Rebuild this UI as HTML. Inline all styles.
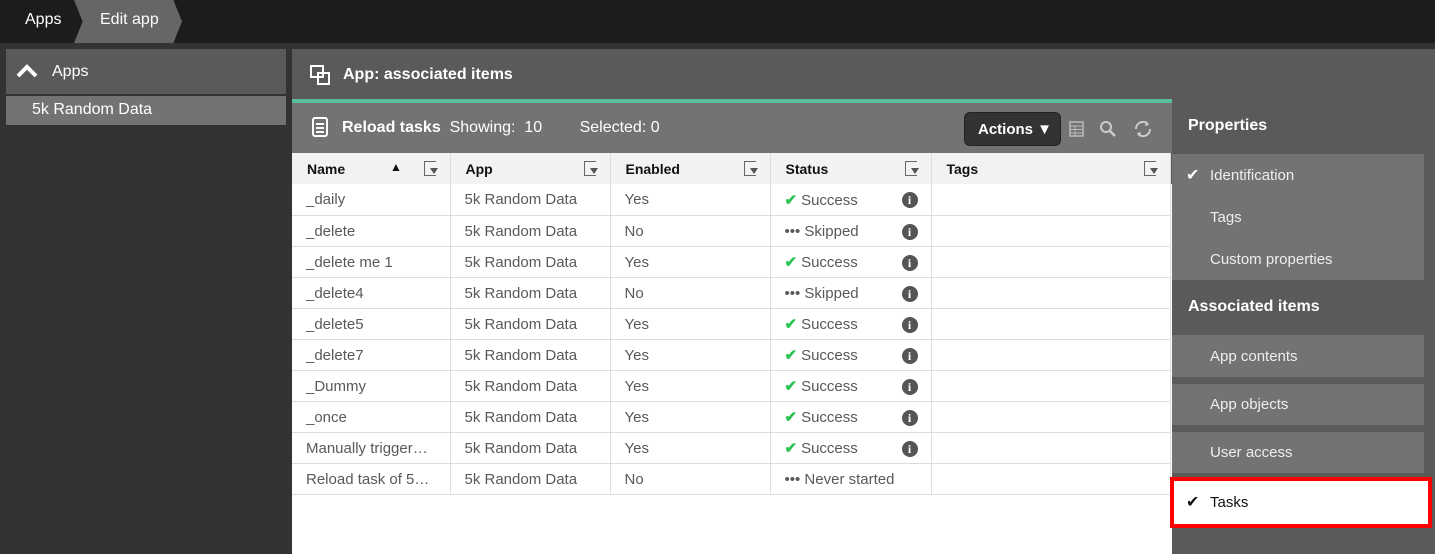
<!DOCTYPE html>
<html><head><style>
*{margin:0;padding:0;box-sizing:border-box}
body{width:1435px;height:554px;background:#333;font-family:"Liberation Sans",sans-serif;position:relative;overflow:hidden;font-size:15px}
.abs{position:absolute}
.top{left:0;top:0;width:1435px;height:43px;background:#1c1c1c}
.crumb{color:#fff;font-size:16px;top:11px}
table{border-collapse:collapse;position:absolute;left:292px;top:153px;width:878px;table-layout:fixed}
th{background:#f2f2f2;height:31px;text-align:left;font-size:14px;font-weight:bold;padding-left:15px;border-right:1px solid #ddd;color:#111;position:relative}
td{height:31px;border-right:1px solid #ddd;border-bottom:1px solid #ddd;padding-left:14px;padding-top:1px;color:#595959;font-size:15px;white-space:nowrap;overflow:hidden;position:relative}
tr.r td{height:31px}
.f{position:absolute;right:14px;top:8px;width:12px;height:15px;border:1.5px solid #666;border-right:none;border-bottom-width:1.5px}
.f:after{content:"";position:absolute;left:5px;top:6px;border:4px solid transparent;border-top:6px solid #555}
.ok{color:#2bc353;font-weight:bold;margin-right:4px}
.info{position:absolute;right:13px;top:8px;width:16px;height:16px;border-radius:50%;background:#555;color:#fff;font-size:12px;font-weight:bold;text-align:center;line-height:16px;font-family:"Liberation Serif",serif}
.ri{left:1172px;width:252px;background:#737373;color:#eee;font-size:15px;padding-left:38px}
</style></head><body>
<div class="abs top"></div>
<div class="abs" style="left:74px;top:0;width:108px;height:43px;background:#666;clip-path:polygon(0 0,92% 0,100% 50%,92% 100%,0 100%,8% 50%)"></div>
<div class="abs crumb" style="left:25px">Apps</div>
<div class="abs crumb" style="left:100px">Edit app</div>

<div class="abs" style="left:6px;top:49px;width:280px;height:45px;background:#5a5a5a"></div>
<svg class="abs" style="left:16px;top:64px" width="22" height="14"><path d="M2 12 L11 3 L20 12" stroke="#fff" stroke-width="4" fill="none"/></svg>
<div class="abs" style="left:52px;top:63px;color:#fff;font-size:16px">Apps</div>
<div class="abs" style="left:6px;top:96px;width:280px;height:29px;background:#737373;color:#fff;padding:5px 0 0 26px;font-size:16px">5k Random Data</div>

<div class="abs" style="left:292px;top:49px;width:1143px;height:505px;background:#5a5a5a"></div>
<svg class="abs" style="left:310px;top:65px" width="22" height="20"><rect x="1" y="1" width="12" height="11" fill="none" stroke="#fff" stroke-width="2"/><path d="M8 8h11v11h-11z" fill="none" stroke="#fff" stroke-width="2"/></svg>
<div class="abs" style="left:343px;top:66px;color:#fff;font-size:16px;font-weight:bold">App: associated items</div>
<div class="abs" style="left:292px;top:99px;width:880px;height:4px;background:#5dbe9a"></div>
<div class="abs" style="left:292px;top:103px;width:880px;height:50px;background:#737373"></div>
<svg class="abs" style="left:312px;top:117px" width="16" height="20"><rect x="1" y="1" width="14" height="18" rx="2" fill="none" stroke="#fff" stroke-width="2"/><rect x="4" y="6" width="8" height="2" fill="#fff"/><rect x="4" y="10" width="8" height="2" fill="#fff"/><rect x="4" y="14" width="8" height="2" fill="#fff"/></svg>
<div class="abs" style="left:342px;top:119px;color:#fff;font-size:16px"><b>Reload tasks</b>&nbsp; Showing:&nbsp; 10 <span style="margin-left:33px">Selected: 0</span></div>
<div class="abs" style="left:964px;top:112px;width:97px;height:34px;background:#333;border-radius:6px;color:#fff;font-weight:bold;font-size:15px;padding:8px 0 0 13px;border:1px solid #222">Actions ▼</div>
<svg class="abs" style="left:1069px;top:121px" width="15" height="16"><rect x="1" y="1" width="13" height="14" fill="none" stroke="#bbb" stroke-width="1.5"/><path d="M1 5h13M1 8.5h13M1 12h13M6 5v10" stroke="#bbb"/></svg>
<svg class="abs" style="left:1099px;top:120px" width="18" height="18"><circle cx="7" cy="7" r="5" stroke="#ccc" stroke-width="2" fill="none"/><path d="M11 11l5 5" stroke="#ccc" stroke-width="2.5"/></svg>
<svg class="abs" style="left:1133px;top:119px" width="20" height="20"><path d="M3 10a7 7 0 0 1 12-5M17 10a7 7 0 0 1-12 5" stroke="#ccc" stroke-width="2" fill="none"/><path d="M13 2l3 4-4 1zM7 18l-3-4 4-1z" fill="#ccc"/></svg>

<div class="abs" style="left:292px;top:184px;width:880px;height:370px;background:#fff"></div>
<table>
<colgroup><col style="width:158px"><col style="width:160px"><col style="width:160px"><col style="width:161px"><col style="width:239px"></colgroup>
<tr><th>Name<span style="position:absolute;left:98px;top:7px;font-size:12px">▲</span><span class="f"></span></th><th>App<span class="f"></span></th><th>Enabled<span class="f"></span></th><th>Status<span class="f"></span></th><th>Tags<span class="f"></span></th></tr>
<tr><td>_daily</td><td>5k Random Data</td><td>Yes</td><td><span class="ok">✔</span>Success<span class="info">i</span></td><td></td></tr>
<tr><td>_delete</td><td>5k Random Data</td><td>No</td><td>••• Skipped<span class="info">i</span></td><td></td></tr>
<tr><td>_delete me 1</td><td>5k Random Data</td><td>Yes</td><td><span class="ok">✔</span>Success<span class="info">i</span></td><td></td></tr>
<tr><td>_delete4</td><td>5k Random Data</td><td>No</td><td>••• Skipped<span class="info">i</span></td><td></td></tr>
<tr><td>_delete5</td><td>5k Random Data</td><td>Yes</td><td><span class="ok">✔</span>Success<span class="info">i</span></td><td></td></tr>
<tr><td>_delete7</td><td>5k Random Data</td><td>Yes</td><td><span class="ok">✔</span>Success<span class="info">i</span></td><td></td></tr>
<tr><td>_Dummy</td><td>5k Random Data</td><td>Yes</td><td><span class="ok">✔</span>Success<span class="info">i</span></td><td></td></tr>
<tr><td>_once</td><td>5k Random Data</td><td>Yes</td><td><span class="ok">✔</span>Success<span class="info">i</span></td><td></td></tr>
<tr><td>Manually trigger…</td><td>5k Random Data</td><td>Yes</td><td><span class="ok">✔</span>Success<span class="info">i</span></td><td></td></tr>
<tr><td>Reload task of 5…</td><td>5k Random Data</td><td>No</td><td>••• Never started</td><td></td></tr>
</table>

<div class="abs" style="left:1188px;top:117px;color:#fff;font-weight:bold;font-size:16px">Properties</div>
<div class="abs ri" style="top:154px;height:126px"></div>
<div class="abs" style="left:1186px;top:165px;color:#fff;font-size:16px">✔</div>
<div class="abs" style="left:1210px;top:167px;color:#eee">Identification</div>
<div class="abs" style="left:1210px;top:209px;color:#eee">Tags</div>
<div class="abs" style="left:1210px;top:251px;color:#eee">Custom properties</div>
<div class="abs" style="left:1188px;top:298px;color:#fff;font-weight:bold;font-size:16px">Associated items</div>
<div class="abs ri" style="top:335px;height:42px;padding-top:13px">App contents</div>
<div class="abs ri" style="top:384px;height:41px;padding-top:12px">App objects</div>
<div class="abs ri" style="top:432px;height:41px;padding-top:12px">User access</div>
<div class="abs" style="left:1170px;top:477px;width:262px;height:51px;border:4px solid #f00;background:#fff;color:#111;padding:13px 0 0 36px">Tasks<span style="position:absolute;left:12px;top:11px;font-size:16px">✔</span></div>
</body></html>
